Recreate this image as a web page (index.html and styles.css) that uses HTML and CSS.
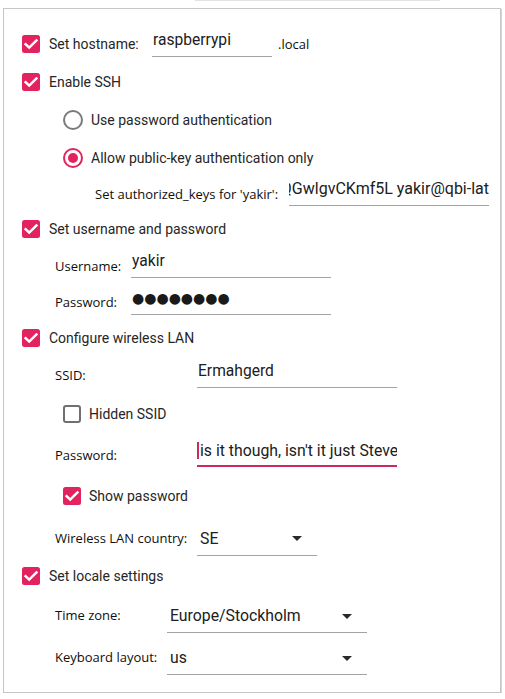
FILE: index.html
```html
<!DOCTYPE html>
<html>
<head>
<meta charset="utf-8">
<link rel="stylesheet" href="styles.css">
</head>
<body>
<div class="topline"></div>
<div class="panel">
  <div class="row h38">
    <svg class="cb" viewBox="0 0 18 18"><rect width="18" height="18" rx="2.5" class="cb-fill"/><path d="M3.6 9.2 L7.2 12.6 L14.4 5.6" class="cb-tick"/></svg>
    <span class="cblabel w-host">Set hostname:</span>
    <div class="field w120">raspberrypi</div>
    <span class="small suffix">.local</span>
  </div>
  <div class="row h38">
    <svg class="cb" viewBox="0 0 18 18"><rect width="18" height="18" rx="2.5" class="cb-fill"/><path d="M3.6 9.2 L7.2 12.6 L14.4 5.6" class="cb-tick"/></svg>
    <span class="cblabel">Enable SSH</span>
  </div>
  <div class="row h38 ind-radio">
    <svg class="radio" viewBox="0 0 20 20"><circle cx="10" cy="10" r="9" class="radio-off"/></svg>
    <span class="cblabel">Use password authentication</span>
  </div>
  <div class="row h37 ind-radio">
    <svg class="radio" viewBox="0 0 20 20"><circle cx="10" cy="10" r="9" class="radio-on"/><circle cx="10" cy="10" r="5" class="radio-dot"/></svg>
    <span class="cblabel">Allow public-key authentication only</span>
  </div>
  <div class="row h35 ind-keys">
    <span class="small w-keys">Set authorized_keys for 'yakir':</span>
    <div class="field w200 clip-left"><span class="nowrap">ssh-rsa AAAAB3NzaC1yc2EAAAADAQABAAABAQC7QGwlgvCKmf5L yakir@qbi-lat</span></div>
  </div>
  <div class="row h36">
    <svg class="cb" viewBox="0 0 18 18"><rect width="18" height="18" rx="2.5" class="cb-fill"/><path d="M3.6 9.2 L7.2 12.6 L14.4 5.6" class="cb-tick"/></svg>
    <span class="cblabel">Set username and password</span>
  </div>
  <div class="row h37 ind-sub">
    <span class="small w-user">Username:</span>
    <div class="field w200">yakir</div>
  </div>
  <div class="row h36 ind-sub">
    <span class="small w-user">Password:</span>
    <div class="field w200 dots">●●●●●●●●</div>
  </div>
  <div class="row h36">
    <svg class="cb" viewBox="0 0 18 18"><rect width="18" height="18" rx="2.5" class="cb-fill"/><path d="M3.6 9.2 L7.2 12.6 L14.4 5.6" class="cb-tick"/></svg>
    <span class="cblabel">Configure wireless LAN</span>
  </div>
  <div class="row h38 ind-sub">
    <span class="small w-wlan">SSID:</span>
    <div class="field w200">Ermahgerd</div>
  </div>
  <div class="row h40 ind-subcb">
    <svg class="cb" viewBox="0 0 18 18"><rect x="1" y="1" width="16" height="16" rx="2" class="cb-off"/></svg>
    <span class="cblabel">Hidden SSID</span>
  </div>
  <div class="row h41 ind-sub">
    <span class="small w-wlan">Password:</span>
    <div class="field w200 focused"><span class="caret"></span>is it though, isn't it just Steve</div>
  </div>
  <div class="row h42 ind-subcb">
    <svg class="cb" viewBox="0 0 18 18"><rect width="18" height="18" rx="2.5" class="cb-fill"/><path d="M3.6 9.2 L7.2 12.6 L14.4 5.6" class="cb-tick"/></svg>
    <span class="cblabel">Show password</span>
  </div>
  <div class="row h41 ind-sub">
    <span class="small w-wlan">Wireless LAN country:</span>
    <div class="combo w120"><span class="combo-text">SE</span><svg class="arrow" viewBox="0 0 10 5"><polygon points="0,0 10,0 5,5"/></svg></div>
  </div>
  <div class="row h36">
    <svg class="cb" viewBox="0 0 18 18"><rect width="18" height="18" rx="2.5" class="cb-fill"/><path d="M3.6 9.2 L7.2 12.6 L14.4 5.6" class="cb-tick"/></svg>
    <span class="cblabel">Set locale settings</span>
  </div>
  <div class="row h42 ind-sub">
    <span class="small w-locale">Time zone:</span>
    <div class="combo w200"><span class="combo-text">Europe/Stockholm</span><svg class="arrow" viewBox="0 0 10 5"><polygon points="0,0 10,0 5,5"/></svg></div>
  </div>
  <div class="row h42 ind-sub">
    <span class="small w-locale">Keyboard layout:</span>
    <div class="combo w200"><span class="combo-text">us</span><svg class="arrow" viewBox="0 0 10 5"><polygon points="0,0 10,0 5,5"/></svg></div>
  </div>
</div>
</body>
</html>
```

FILE: styles.css
```css
html, body {
  margin: 0;
  padding: 0;
  background: #ffffff;
}

body {
  font-family: Roboto, "Liberation Sans", sans-serif;
  color: #212121;
}

.topline {
  height: 1px;
  width: 245px;
  margin-left: 195px;
  background: #e2e2e2;
}

.panel {
  box-sizing: border-box;
  width: 498px;
  height: 685px;
  margin: 7px 0 0 3px;
  border: 1px solid #c6c6c6;
  box-shadow: 1px 1px 0 #d4d4d4;
  padding: 16px 0 0 18px;
  display: flex;
  flex-direction: column;
}

.row {
  display: flex;
  align-items: center;
  flex-shrink: 0;
}

.h35 { height: 35px; }
.h36 { height: 36px; }
.h37 { height: 37px; }
.h38 { height: 38px; }
.h40 { height: 40px; }
.h41 { height: 41px; }
.h42 { height: 42px; }

.ind-radio { padding-left: 41px; }
.ind-keys { padding-left: 73px; }
.ind-sub { padding-left: 33px; }
.ind-subcb { padding-left: 41px; }

.cb {
  width: 18px;
  height: 18px;
  flex-shrink: 0;
  margin-right: 9px;
}

.ind-subcb .cb {
  margin-right: 8px;
}

.cb-fill { fill: #e2235f; }
.cb-tick {
  fill: none;
  stroke: #ffffff;
  stroke-width: 2.5;
  stroke-linecap: square;
}
.cb-off {
  fill: none;
  stroke: #707070;
  stroke-width: 2;
}

.radio {
  width: 20px;
  height: 20px;
  flex-shrink: 0;
  margin-right: 8px;
}
.radio-off {
  fill: none;
  stroke: #7a7a7a;
  stroke-width: 2;
}
.radio-on {
  fill: none;
  stroke: #e2235f;
  stroke-width: 2;
}
.radio-dot { fill: #e2235f; }

.cblabel {
  font-family: Roboto, sans-serif;
  font-size: 14px;
  color: #262626;
  white-space: nowrap;
}

.small {
  font-family: "Open Sans", "Noto Sans", sans-serif;
  font-size: 13px;
  color: #0e0e0e;
  white-space: nowrap;
}

.w-host { width: 103px; flex-shrink: 0; }
.w-keys { width: 194px; flex-shrink: 0; }
.w-user { width: 76px; flex-shrink: 0; }
.w-wlan { width: 142px; flex-shrink: 0; }
.w-locale { width: 112px; flex-shrink: 0; }

.suffix { margin-left: 6px; }

.field {
  box-sizing: border-box;
  height: 25px;
  border-bottom: 1px solid #a3a3a3;
  padding: 0 0 8px 1px;
  font-family: Roboto, sans-serif;
  font-size: 15.6px;
  line-height: 16px;
  color: #202020;
  white-space: nowrap;
  overflow: hidden;
  flex-shrink: 0;
}

.w120 { width: 120px; }
.w200 { width: 200px; }

.clip-left {
  display: flex;
  justify-content: flex-end;
  padding-left: 0;
  font-size: 16px;
}
.nowrap {
  white-space: nowrap;
  flex-shrink: 0;
}

.dots {
  font-family: "DejaVu Sans", sans-serif;
  font-size: 14px;
  letter-spacing: 0;
  color: #1a1a1a;
}

.focused {
  border-bottom: 2px solid #cc2a5c;
  padding: 0 0 7px 0;
  font-size: 15.8px;
}

.caret {
  display: inline-block;
  width: 2px;
  height: 17px;
  background: #cc2a5c;
  vertical-align: -3px;
  margin-right: 1px;
}

.combo {
  box-sizing: border-box;
  height: 36px;
  border-bottom: 1px solid #a3a3a3;
  padding: 11px 15px 8px 3px;
  display: flex;
  align-items: center;
  font-family: Roboto, sans-serif;
  font-size: 15.8px;
  line-height: 16px;
  color: #202020;
  flex-shrink: 0;
}

.combo-text {
  flex: 1;
  white-space: nowrap;
}

.arrow {
  width: 10px;
  height: 5px;
  fill: #2a2a2a;
}
```
